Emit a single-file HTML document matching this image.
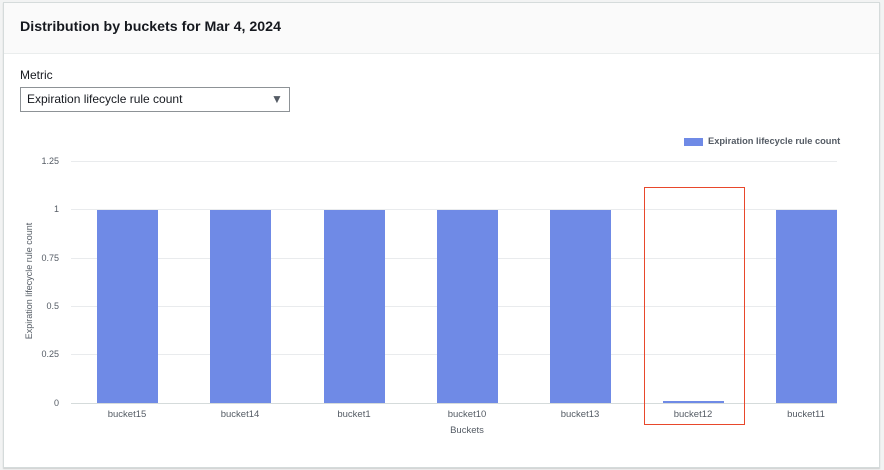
<!DOCTYPE html><html><head><style>
body{margin:0;width:884px;height:470px;background:#f2f3f3;font-family:"Liberation Sans",sans-serif;position:relative;overflow:hidden}
.a{position:absolute}
.p{left:3px;top:2px;width:875px;height:464px;background:#fff;border:1px solid #d5dbdb;box-shadow:0 1px 1px rgba(0,0,0,.15)}
.h{left:4px;top:3px;width:875px;height:50px;background:#fafafa;border-bottom:1px solid #eaeded}
.g{left:71px;width:766px;height:1px;background:#e9ebed}
.y{width:30px;text-align:right;left:29px;font-size:9px;color:#545b64}
.b{width:61px;background:#6f8ae6;top:210px;height:193px}
.l{width:100px;text-align:center;font-size:9.5px;color:#545b64;top:409px}
</style></head><body>
<div class="a p"></div><div class="a h"></div>
<div class="a" style="left:20px;top:19px;font-size:14.2px;font-weight:bold;color:#16191f">Distribution by buckets for Mar 4, 2024</div>
<div class="a" style="left:20px;top:68px;font-size:12px;color:#16191f">Metric</div>
<div class="a" style="left:20px;top:87px;height:23px;border:1px solid #8d9296;font-size:12px;color:#16191f;line-height:23px;padding-left:6px;width:262px">Expiration lifecycle rule count<span class="a" style="left:250px;top:0;font-size:12px;color:#545b64">▼</span></div>
<div class="a" style="left:684px;top:138px;width:19px;height:8px;background:#6f8ae6"></div>
<div class="a" style="left:708px;top:136px;font-size:9.3px;font-weight:bold;color:#545b64">Expiration lifecycle rule count</div>
<div class="a g" style="top:161px"></div><div class="a g" style="top:209px"></div><div class="a g" style="top:258px"></div><div class="a g" style="top:306px"></div><div class="a g" style="top:354px"></div><div class="a g" style="top:403px;background:#d5dbdb"></div>
<div class="a y" style="top:156px">1.25</div><div class="a y" style="top:204px">1</div><div class="a y" style="top:253px">0.75</div><div class="a y" style="top:301px">0.5</div><div class="a y" style="top:349px">0.25</div><div class="a y" style="top:398px">0</div>
<div class="a b" style="left:97px"></div><div class="a b" style="left:210px"></div><div class="a b" style="left:324px"></div><div class="a b" style="left:437px"></div><div class="a b" style="left:550px"></div><div class="a b" style="left:663px;top:401px;height:2px"></div><div class="a b" style="left:776px"></div>
<div class="a l" style="left:77px">bucket15</div><div class="a l" style="left:190px">bucket14</div><div class="a l" style="left:304px">bucket1</div><div class="a l" style="left:417px">bucket10</div><div class="a l" style="left:530px">bucket13</div><div class="a l" style="left:643px">bucket12</div><div class="a l" style="left:756px">bucket11</div>
<div class="a" style="left:417px;top:425px;width:100px;text-align:center;font-size:9.5px;color:#545b64">Buckets</div>
<div class="a" style="left:-41px;top:276px;width:140px;text-align:center;font-size:9px;color:#545b64;transform:rotate(-90deg)">Expiration lifecycle rule count</div>
<div class="a" style="left:644px;top:187px;width:99px;height:236px;border:1.5px solid #e8472b"></div>
</body></html>
